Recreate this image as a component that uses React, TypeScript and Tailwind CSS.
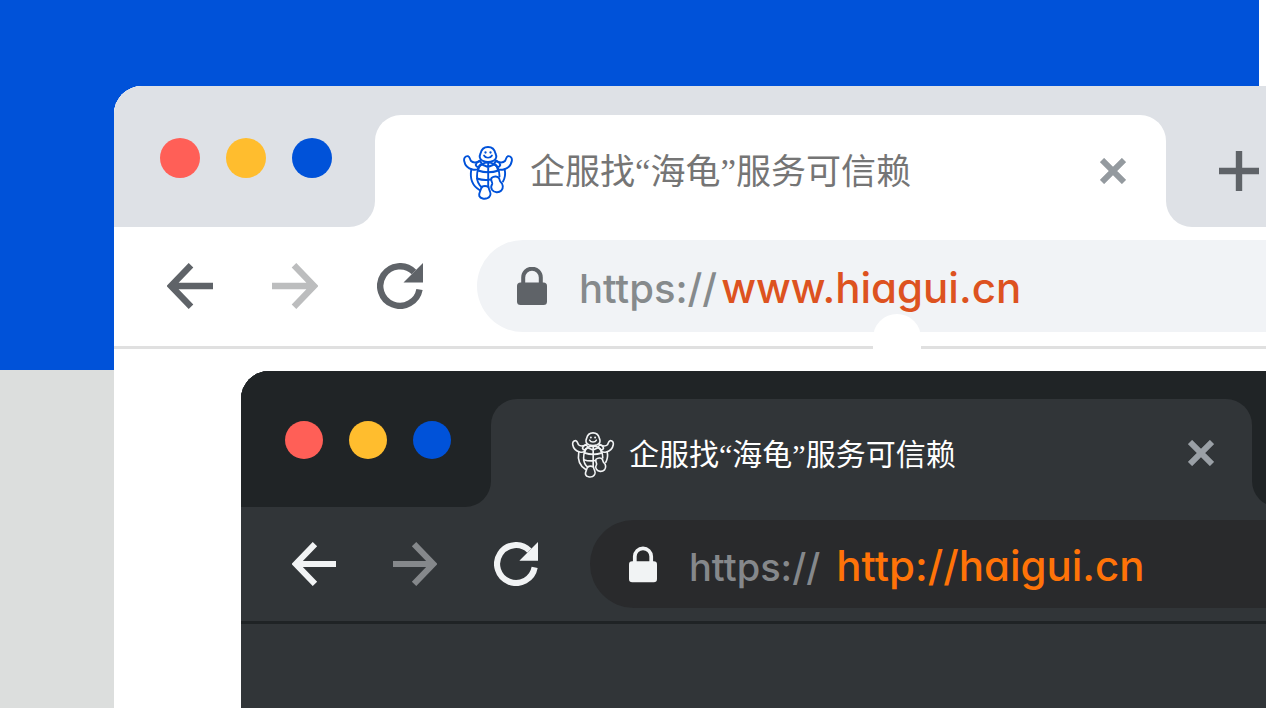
import { clsx } from 'clsx';

type Theme = 'light' | 'dark';

interface IconProps {
  className?: string;
}

const TAB_TITLE = '企服找“海龟”服务可信赖';

const BackIcon = ({ className }: IconProps) => (
  <svg viewBox="0 0 46 46" className={className} fill="none" stroke="currentColor" strokeWidth="6.4" aria-hidden="true">
    <path d="M46 23H5M24 2.2L4 23l20 20.8" />
  </svg>
);

const ForwardIcon = ({ className }: IconProps) => (
  <svg viewBox="0 0 46 46" className={className} fill="none" stroke="currentColor" strokeWidth="6.4" aria-hidden="true">
    <path d="M0 23h41M22 2.2L42 23 22 43.8" />
  </svg>
);

const ReloadIcon = ({ className }: IconProps) => (
  <svg viewBox="0 0 46 46" className={className} fill="none" aria-hidden="true">
    <path
      d="M42.5 26.5A19.8 19.8 0 1 1 37 9"
      stroke="currentColor"
      strokeWidth="6.4"
    />
    <path d="M46 0v19.5H26.5z" fill="currentColor" />
  </svg>
);

const LockIcon = ({ className }: IconProps) => (
  <svg viewBox="0 0 30 38" className={className} fill="none" aria-hidden="true">
    <path d="M6.2 18V10.5a8.8 8.8 0 0 1 17.6 0V18" stroke="currentColor" strokeWidth="4" />
    <rect y="15.5" width="30" height="22.5" rx="3.5" fill="currentColor" />
  </svg>
);

const CloseIcon = ({ className }: IconProps) => (
  <svg viewBox="0 0 26 26" className={className} stroke="currentColor" strokeWidth="6" aria-hidden="true">
    <path d="M2 2l22 22M24 2L2 24" />
  </svg>
);

const PlusIcon = ({ className }: IconProps) => (
  <svg viewBox="0 0 40 40" className={className} stroke="currentColor" strokeWidth="6.4" aria-hidden="true">
    <path d="M20 0v40M0 20h40" />
  </svg>
);

const TurtleIcon = ({ className }: IconProps) => (
  <svg
    viewBox="0 0 50 54"
    className={className}
    fill="none"
    stroke="currentColor"
    strokeWidth="1.9"
    strokeLinecap="round"
    strokeLinejoin="round"
    aria-hidden="true"
  >
    {/* head */}
    <path d="M20 15c-3.500-1.500-4-4.500-2.500-7.500C18.500 3 21 1 25 1s6.500 2 7.500 6.500C34 10.500 33.500 13.500 30 15c-3 1.200-7 1.200-10 0z" />
    <path d="M21 9.500c1.500 3 6.500 3 8 0" strokeWidth="1.7" />
    <path d="M22.500 6.300v.2M27.500 6.300v.2" strokeWidth="2.300" />
    {/* flippers */}
    <path d="M17 14.500c-3 2.500-7 2.500-9 .5-1-1.500-1-4-3-4.800C2 9.800.7 12.500 1.200 15c.8 4.500 4.300 7.500 8.300 8.500 2 .5 4.200.3 6-.5" />
    <path d="M33 14.500c3 2.500 7 2.500 9 .5 1-1.500 1-4 3-4.800 3-.4 4.300 2.300 3.800 4.800-.8 4.500-4.300 7.500-8.300 8.500-2 .5-4.200.3-6-.5" />
    {/* shoulders */}
    <path d="M15 22.500c.5-2 2-3.700 4-4.500-.5-1.500-1.500-2.500-2.500-2.700-1.500.2-3.500 2-3.800 3.700.3 1.200 1.300 2 2.800 2.200M35 22.500c-.5-2-2-3.700-4-4.500.5-1.500 1.500-2.500 2.500-2.700 1.500.2 3.500 2 3.800 3.700-.3 1.200-1.300 2-2.800 2.200" />
    {/* shell */}
    <path d="M19 18c3.500-1.700 8.500-1.700 12 0 3.500 2.500 5.500 7 5.500 12.500M19 18c-3.500 2.500-5 7-5 12.500 0 5 1.800 8.500 5 11" />
    <path d="M8.300 23.500c-1.500 8.500.8 16 8.200 20.500M41.700 23.500c.8 4 .3 8.500-1.700 12" />
    <path d="M25.200 17v24M15 24.500c6.500 2.300 14 2.300 20.500 0M14 32.500c5 1.700 9.500 1.800 14 1M19 18.500l6 2.500 6-2.500" />
    {/* feet */}
    <path d="M28.500 32c2.500-2.200 6.500-2 7.700.5.600 1.500.3 2.300 1.500 3.500 2.600 2 2.800 6 .7 8.500-2.500 2.500-7.400 2.300-9.400-.7-1.200-2-1-4 .2-5.800.5-2-2-3.500-.7-6z" />
    <path d="M18.500 40.800c2.300-1 4.700-1 7 0 .2 1.700.8 3.200 1.500 4.700 1 2.500.2 5.500-2.500 6.700-3 1-7 .5-8.200-2.200-.8-3.300 1.700-5.500 2.200-9.200z" />
  </svg>
);

const WindowDots = ({ theme }: { theme: Theme }) => {
  const size = theme === 'light' ? 'size-10' : 'size-[38px]';
  return (
    <div className="flex gap-[26px]">
      <button type="button" aria-label="Close window" className={clsx('rounded-full bg-[#ff5f57]', size)} />
      <button type="button" aria-label="Minimize window" className={clsx('rounded-full bg-[#ffbd2e]', size)} />
      <button type="button" aria-label="Zoom window" className={clsx('rounded-full bg-[#0052d9]', size)} />
    </div>
  );
};

const LightWindow = ({ children }: { children: React.ReactNode }) => (
  <section className="flex flex-1 flex-col overflow-hidden rounded-tl-[28px] bg-white">
    <header className="flex h-[141px] bg-[#dee1e6]">
      <div className="w-[261px] shrink-0 bg-white">
        <div className="flex h-full items-center rounded-br-[26px] bg-[#dee1e6] pt-[2px] pl-[46px]">
          <WindowDots theme="light" />
        </div>
      </div>
      <div className="mt-[29px] flex min-w-0 flex-1 items-center rounded-t-[26px] bg-white pr-10 pl-[88px]">
        <div className="flex min-w-0 flex-1 items-center gap-[17px] pt-1">
          <TurtleIcon className="h-[54px] w-[50px] shrink-0 text-[#0052d9]" />
          <span className="font-['Liberation_Serif','Noto_Sans_CJK_SC',sans-serif] text-[35px] leading-[40px] whitespace-nowrap text-[#757575]">
            {TAB_TITLE}
          </span>
        </div>
        <button type="button" aria-label="Close tab" className="text-[#949a9f]">
          <CloseIcon className="size-[26px]" />
        </button>
      </div>
      <div className="w-[100px] shrink-0 bg-white">
        <div className="flex h-full items-center rounded-bl-[26px] bg-[#dee1e6] pt-[29px] pl-[53px]">
          <button type="button" aria-label="New tab" className="text-[#5f6368]">
            <PlusIcon className="size-10" />
          </button>
        </div>
      </div>
    </header>

    <div className="relative flex items-center border-b-[3px] border-[#e0e0e0] pt-[13px] pb-[14px] pl-[53px]">
      <div className="flex gap-[59px] text-[#5f6368]">
        <button type="button" aria-label="Back">
          <BackIcon className="size-[46px]" />
        </button>
        <button type="button" aria-label="Forward" className="text-[#bcbdbe]">
          <ForwardIcon className="size-[46px]" />
        </button>
        <button type="button" aria-label="Reload">
          <ReloadIcon className="size-[46px]" />
        </button>
      </div>
      <label className="ml-[54px] flex h-[92px] min-w-0 flex-1 items-center rounded-l-full bg-[#f1f3f6] pl-10">
        <LockIcon className="h-[38px] w-[30px] shrink-0 text-[#5f6368]" />
        <span className="ml-8 flex min-w-0 flex-1 items-baseline pt-[2px] font-medium">
          <span className="text-[40px] text-[#868a8c]">https://</span>
          <input
            type="text"
            aria-label="Address"
            defaultValue="www.hiagui.cn"
            className="ml-1 min-w-0 flex-1 bg-transparent text-[42px] text-[#dd5220] outline-none [font-feature-settings:'cv11']"
          />
        </span>
      </label>
      {/* bump that cuts into the address bar and the divider */}
      <div className="absolute right-[345px] -bottom-[3px] h-[35px] w-12 rounded-t-[24px] bg-white" />
    </div>

    <div className="flex flex-1 flex-col pt-[22px] pl-[127px]">{children}</div>
  </section>
);

const DarkWindow = () => (
  <section className="flex-1 overflow-hidden rounded-tl-[28px] bg-[#313538]">
    <header className="flex h-[136px] bg-[#202426]">
      <div className="w-[250px] shrink-0 bg-[#313538]">
        <div className="flex h-full items-center rounded-br-[26px] bg-[#202426] pt-[2px] pl-11">
          <WindowDots theme="dark" />
        </div>
      </div>
      <div className="mt-7 flex min-w-0 flex-1 items-center rounded-t-[26px] bg-[#313538] pr-[38px] pl-20">
        <div className="flex min-w-0 flex-1 items-center gap-[14px] pt-1">
          <TurtleIcon className="h-[46px] w-[44px] shrink-0 text-[#f1f3f4]" />
          <span className="font-['Liberation_Serif','Noto_Sans_CJK_SC',sans-serif] text-[30px] leading-[36px] whitespace-nowrap text-white">
            {TAB_TITLE}
          </span>
        </div>
        <button type="button" aria-label="Close tab" className="text-[#9aa0a6]">
          <CloseIcon className="size-[26px]" />
        </button>
      </div>
      <div className="w-[14px] shrink-0 overflow-hidden bg-[#313538]">
        <div className="h-full w-[60px] rounded-bl-[26px] bg-[#202426]" />
      </div>
    </header>

    <div className="flex items-center border-b-[3px] border-[#1f2325] py-[13px] pl-[51px]">
      <div className="flex gap-[57px] text-[#f1f3f4]">
        <button type="button" aria-label="Back">
          <BackIcon className="size-11" />
        </button>
        <button type="button" aria-label="Forward" className="text-[#85888b]">
          <ForwardIcon className="size-11" />
        </button>
        <button type="button" aria-label="Reload">
          <ReloadIcon className="size-11" />
        </button>
      </div>
      <label className="ml-[52px] flex h-[88px] min-w-0 flex-1 items-center rounded-l-full bg-[#292a2c] pl-[39px]">
        <LockIcon className="h-[37px] w-7 shrink-0 text-[#f1f3f4]" />
        <span className="ml-8 flex min-w-0 flex-1 items-baseline pt-[2px] font-medium">
          <span className="text-[38px] text-[#85888b]">https://</span>
          <input
            type="text"
            aria-label="Address"
            defaultValue="http://haigui.cn"
            className="ml-4 min-w-0 flex-1 bg-transparent text-[42px] text-[#ff7308] outline-none [font-feature-settings:'cv11']"
          />
        </span>
      </label>
    </div>
  </section>
);

export default function App() {
  return (
    <main className="grid min-h-screen overflow-hidden bg-white font-[Inter,'Noto_Sans_CJK_SC',sans-serif]">
      <div className="col-start-1 row-start-1 flex flex-col">
        <div className="mr-[7px] h-[370px] bg-[#0052d9]" />
        <div className="flex-1 bg-[#dcdedd]" />
      </div>
      <div className="col-start-1 row-start-1 flex min-w-0 flex-col pt-[86px] pl-[114px]">
        <LightWindow>
          <DarkWindow />
        </LightWindow>
      </div>
    </main>
  );
}
